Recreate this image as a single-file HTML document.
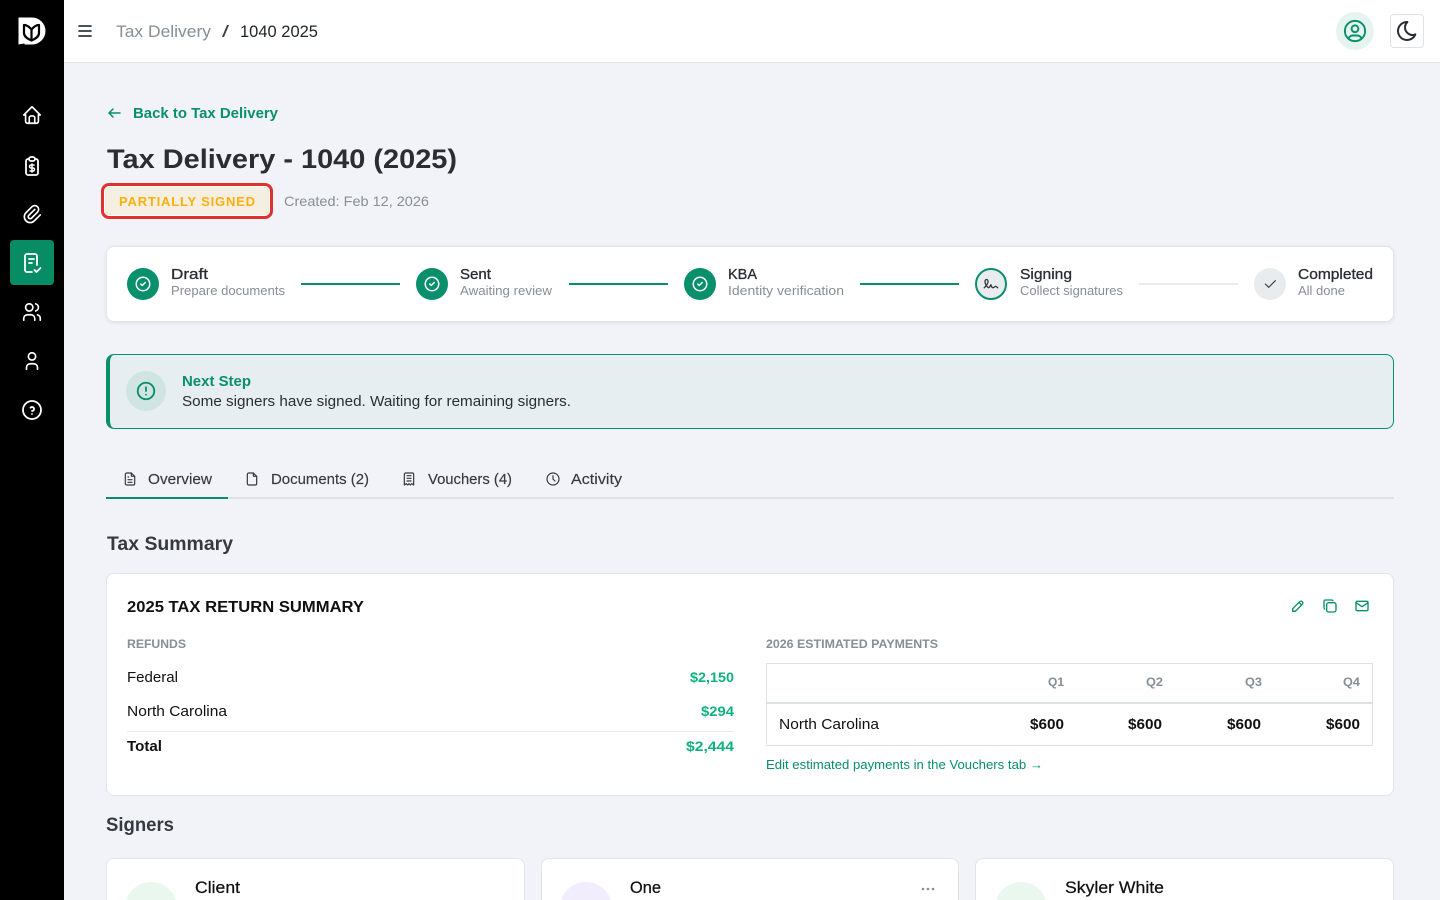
<!DOCTYPE html>
<html lang="en"><head><meta charset="utf-8"><title>Tax Delivery - 1040 (2025)</title>
<style>
html,body{margin:0;padding:0;width:1440px;height:900px;overflow:hidden;background:#f1f3f8}
#app{position:relative;width:1440px;height:900px;overflow:hidden;background:#f1f3f8}
.b{position:absolute;box-sizing:border-box}
.card{background:#fff;border:1px solid #e2e4ea;border-radius:8px}
svg{position:absolute;left:0;top:0}
text{font-family:"Liberation Sans",sans-serif;font-size:14px;fill:#212529}
.i{fill:none;stroke-width:2;stroke-linecap:round;stroke-linejoin:round}
.w{stroke:#fff}.g{stroke:#088f6b}.d{stroke:#343a40}
.s{font-size:14.5px;font-weight:normal;fill:#2b2d33;stroke:#2b2d33;stroke-width:.3}
.sub{font-size:12.5px;fill:#868e96}
.m{font-weight:bold;fill:#0eb27f;font-size:14px}
.th{font-size:12px;fill:#868e96;font-weight:bold}
.tab{font-size:14.5px;fill:#343a40;stroke:#343a40;stroke-width:.15}
</style></head><body>
<div id="app">
<div class="b" style="left:0;top:0;width:64px;height:900px;background:#000"></div>
<div class="b" style="left:64px;top:0;width:1376px;height:63px;background:#fff;border-bottom:1px solid #e5e7eb"></div>
<div class="b" style="left:10px;top:240px;width:44px;height:45px;background:#088c63;border-radius:4px"></div>
<div class="b" style="left:1336px;top:12px;width:38px;height:38px;background:#e6f4f0;border-radius:50%"></div>
<div class="b" style="left:1390px;top:14px;width:34px;height:34px;background:#fff;border:1px solid #dee2e6;border-radius:4px"></div>
<div class="b" style="left:101px;top:183px;width:172px;height:36px;border:3px solid #e03131;border-radius:8px;background:#fff"></div>
<div class="b" style="left:105px;top:187px;width:164px;height:28px;background:#f5efe2;border-radius:4px"></div>
<div class="b card" style="left:106px;top:246px;width:1288px;height:76px;box-shadow:0 1px 4px rgba(0,0,0,.08)"></div>
<div class="b" style="left:301px;top:283px;width:99px;height:2px;background:#088f6b"></div>
<div class="b" style="left:569px;top:283px;width:99px;height:2px;background:#088f6b"></div>
<div class="b" style="left:860px;top:283px;width:99px;height:2px;background:#088f6b"></div>
<div class="b" style="left:1139px;top:283px;width:99px;height:2px;background:#e9ecef"></div>
<div class="b" style="left:127px;top:268px;width:32px;height:32px;border-radius:50%;background:#088f6b"></div>
<div class="b" style="left:416px;top:268px;width:32px;height:32px;border-radius:50%;background:#088f6b"></div>
<div class="b" style="left:684px;top:268px;width:32px;height:32px;border-radius:50%;background:#088f6b"></div>
<div class="b" style="left:975px;top:268px;width:32px;height:32px;border-radius:50%;background:#e9ecef;border:2px solid #088f6b"></div>
<div class="b" style="left:1254px;top:268px;width:32px;height:32px;border-radius:50%;background:#e9ecef"></div>
<div class="b" style="left:106px;top:354px;width:1288px;height:75px;background:#e7eef1;border:1px solid #088f6b;border-left-width:4px;border-radius:8px"></div>
<div class="b" style="left:126px;top:371px;width:40px;height:40px;border-radius:50%;background:#d0e4e2"></div>
<div class="b" style="left:106px;top:497px;width:1288px;height:2px;background:#dee2e6"></div>
<div class="b" style="left:106px;top:497px;width:122px;height:2px;background:#088f6b"></div>
<div class="b card" style="left:106px;top:573px;width:1288px;height:223px"></div>
<div class="b" style="left:127px;top:731px;width:607px;height:1px;background:#e9ecef"></div>
<div class="b" style="left:766px;top:663px;width:607px;height:83px;border:1px solid #dee2e6;background:#fff"></div>
<div class="b" style="left:767px;top:702px;width:605px;height:2px;background:#dee2e6"></div>
<div class="b card" style="left:106px;top:858px;width:419px;height:80px"></div>
<div class="b card" style="left:541px;top:858px;width:418px;height:80px"></div>
<div class="b card" style="left:975px;top:858px;width:419px;height:80px"></div>
<div class="b" style="left:125px;top:882px;width:52px;height:52px;border-radius:50%;background:#e9f7ee"></div>
<div class="b" style="left:560px;top:882px;width:52px;height:52px;border-radius:50%;background:#f1edfc"></div>
<div class="b" style="left:995px;top:882px;width:52px;height:52px;border-radius:50%;background:#e9f7ee"></div>

<svg width="1440" height="900" viewBox="0 0 1440 900">
<!-- logo -->
<path d="M18.500 17.500H32a13.500 13.500 0 0 1 0 27H18.500z" fill="#fff"/>
<path d="M24 25c2.500 0 5 1.500 7.500 4.500C34 26.500 36.500 25 39 25v8c0 3.500-3 5.500-7.500 7.500C27 38.500 24 36.500 24 33z" fill="none" stroke="#000" stroke-width="2.200" stroke-linejoin="round"/>
<path d="M31.500 29.500V40.500" stroke="#000" stroke-width="2.200"/>
<path d="M18.500 44.500l6-1v1.200z" fill="#000"/>
<!-- sidebar icons -->
<g class="i w" style="stroke-width:1.800">
<svg x="21" y="104" width="22" height="22" viewBox="0 0 24 24"><path d="M5 12H3l9-9 9 9h-2"/><path d="M5 12v7a2 2 0 0 0 2 2h10a2 2 0 0 0 2-2v-7"/><path d="M9 21v-6a2 2 0 0 1 2-2h2a2 2 0 0 1 2 2v6"/></svg>
<svg x="20" y="154" width="24" height="22" viewBox="0 0 24 22" preserveAspectRatio="none"><path d="M9 5H8a2 2 0 0 0-2 2v12a2 2 0 0 0 2 2h8a2 2 0 0 0 2-2V7a2 2 0 0 0-2-2h-1"/><rect x="9" y="3" width="6" height="4" rx="2"/><path d="M14 11h-3a1.500 1.500 0 0 0 0 3h2a1.500 1.500 0 0 1 0 3h-3M12 10v8" stroke-width="1.500"/></svg>
<svg x="21" y="203" width="22" height="22" viewBox="0 0 24 24"><path d="M15 7l-6.500 6.500a1.500 1.500 0 0 0 3 3L18 10a3 3 0 0 0-6-6l-6.500 6.500a4.500 4.500 0 0 0 9 9L21 13"/></svg>
<svg x="20" y="251" width="24" height="24" viewBox="0 0 24 24"><path d="M12 21H7a2 2 0 0 1-2-2V5a2 2 0 0 1 2-2h8a2 2 0 0 1 2 2v9"/><path d="M9 8h5M9 12h3M14.500 19l2 2 4-4"/></svg>
<svg x="21" y="301" width="22" height="22" viewBox="0 0 24 24"><path d="M5 7a4 4 0 1 0 8 0 4 4 0 0 0-8 0"/><path d="M3 21v-2a4 4 0 0 1 4-4h4a4 4 0 0 1 4 4v2"/><path d="M16 3.130a4 4 0 0 1 0 7.750"/><path d="M21 21v-2a4 4 0 0 0-3-3.850"/></svg>
<svg x="21" y="350" width="22" height="22" viewBox="0 0 24 24"><path d="M8 7a4 4 0 1 0 8 0 4 4 0 0 0-8 0"/><path d="M6 21v-2a4 4 0 0 1 4-4h4a4 4 0 0 1 4 4v2"/></svg>
<svg x="20" y="398" width="24" height="24" viewBox="0 0 24 24"><circle cx="12" cy="12" r="9"/><path d="M12 16v.010"/><path d="M12 13a2 2 0 0 0 .914-3.782 1.980 1.980 0 0 0-2.414.483"/></svg>
</g>
<!-- header icons -->
<path d="M79 26h12M79 31h12M79 36h12" stroke="#343a40" stroke-width="1.700" stroke-linecap="round" fill="none"/>
<svg x="1341.500" y="17.500" width="27" height="27" viewBox="0 0 24 24" class="i g" style="stroke-width:1.700"><circle cx="12" cy="12" r="9"/><circle cx="12" cy="10" r="3"/><path d="M6.168 18.849A4 4 0 0 1 10 16h4a4 4 0 0 1 3.834 2.855"/></svg>
<svg x="1395" y="19" width="24" height="24" viewBox="0 0 24 24" class="i d"><path d="M12 3h.393a7.500 7.500 0 0 0 7.920 12.446A9 9 0 1 1 12 3z" stroke="#2b2d33"/></svg>
<path d="M109 113h11M109 113l4-4M109 113l4 4" class="i g" style="stroke-width:1.500"/>
<text x="116" y="37" style="font-size:17px;fill:#868e96" textLength="95" lengthAdjust="spacingAndGlyphs">Tax Delivery</text>
<text x="222" y="37" style="font-size:17px;fill:#343a40" textLength="7" lengthAdjust="spacingAndGlyphs">/</text>
<text x="240" y="37" style="font-size:17px;fill:#212529" textLength="78" lengthAdjust="spacingAndGlyphs">1040 2025</text>
<text x="133" y="118" style="font-size:14.500px;font-weight:bold;fill:#088f6b" textLength="145" lengthAdjust="spacingAndGlyphs">Back to Tax Delivery</text>
<text x="107" y="168" style="font-size:27px;font-weight:bold;fill:#2b2d33" textLength="350" lengthAdjust="spacingAndGlyphs">Tax Delivery - 1040 (2025)</text>
<text x="119" y="206" style="font-size:13px;font-weight:bold;fill:#fdb00c" textLength="136">PARTIALLY SIGNED</text>
<text x="284" y="206" style="font-size:14px;fill:#868e96" textLength="145" lengthAdjust="spacingAndGlyphs">Created: Feb 12, 2026</text>
<!-- stepper -->
<g class="i w" style="stroke-width:2">
<svg x="134" y="275" width="18" height="18" viewBox="0 0 24 24"><circle cx="12" cy="12" r="9"/><path d="M9 12l2 2 4-4"/></svg>
<svg x="423" y="275" width="18" height="18" viewBox="0 0 24 24"><circle cx="12" cy="12" r="9"/><path d="M9 12l2 2 4-4"/></svg>
<svg x="691" y="275" width="18" height="18" viewBox="0 0 24 24"><circle cx="12" cy="12" r="9"/><path d="M9 12l2 2 4-4"/></svg>
</g>
<svg x="982" y="275" width="18" height="18" viewBox="0 0 24 24" class="i d" style="stroke-width:1.800"><path d="M3 17c3.333-3.333 5-6 5-8 0-3-1-3-2-3s-2.032 1.085-2 3c.034 2.048 1.658 4.877 2.500 6 1.500 2 2.500 2.500 3.500 1l2-3c.333 2.667 1.333 4 3 4 .53 0 2.639-2 3-2 .517 0 1.517.667 3 2"/></svg>
<svg x="1262" y="276" width="16" height="16" viewBox="0 0 24 24" class="i d" style="stroke-width:1.700"><path d="M5 12l5 5L20 7"/></svg>
<text class="s" x="171" y="279" textLength="37" lengthAdjust="spacingAndGlyphs">Draft</text>
<text class="sub" x="171" y="295" textLength="114" lengthAdjust="spacingAndGlyphs">Prepare documents</text>
<text class="s" x="460" y="279" textLength="31" lengthAdjust="spacingAndGlyphs">Sent</text>
<text class="sub" x="460" y="295" textLength="92" lengthAdjust="spacingAndGlyphs">Awaiting review</text>
<text class="s" x="728" y="279" textLength="29" lengthAdjust="spacingAndGlyphs">KBA</text>
<text class="sub" x="728" y="295" textLength="116" lengthAdjust="spacingAndGlyphs">Identity verification</text>
<text class="s" x="1020" y="279" textLength="52" lengthAdjust="spacingAndGlyphs">Signing</text>
<text class="sub" x="1020" y="295" textLength="103" lengthAdjust="spacingAndGlyphs">Collect signatures</text>
<text class="s" x="1298" y="279" textLength="75" lengthAdjust="spacingAndGlyphs">Completed</text>
<text class="sub" x="1298" y="295" textLength="47" lengthAdjust="spacingAndGlyphs">All done</text>
<!-- next step -->
<svg x="135" y="380" width="22" height="22" viewBox="0 0 24 24" class="i g"><circle cx="12" cy="12" r="9"/><path d="M12 8v4M12 16h.010"/></svg>
<text x="182" y="386" style="font-size:14.500px;font-weight:bold;fill:#088f6b" textLength="69" lengthAdjust="spacingAndGlyphs">Next Step</text>
<text x="182" y="406" style="font-size:14.500px;fill:#2b2d33" textLength="389" lengthAdjust="spacingAndGlyphs">Some signers have signed. Waiting for remaining signers.</text>
<!-- tabs -->
<g class="i d" style="stroke-width:1.800">
<svg x="122" y="471" width="16" height="16" viewBox="0 0 24 24"><path d="M14 3v4a1 1 0 0 0 1 1h4"/><path d="M17 21H7a2 2 0 0 1-2-2V5a2 2 0 0 1 2-2h7l5 5v11a2 2 0 0 1-2 2z"/><path d="M9 9h1M9 13h6M9 17h6"/></svg>
<svg x="244" y="471" width="16" height="16" viewBox="0 0 24 24"><path d="M14 3v4a1 1 0 0 0 1 1h4"/><path d="M17 21H7a2 2 0 0 1-2-2V5a2 2 0 0 1 2-2h7l5 5v11a2 2 0 0 1-2 2z"/></svg>
<svg x="401" y="471" width="16" height="16" viewBox="0 0 24 24"><path d="M5 21V5a2 2 0 0 1 2-2h10a2 2 0 0 1 2 2v16l-3-2-2 2-2-2-2 2-2-2-3 2"/><path d="M9 7h6M9 11h6M9 15h6"/></svg>
<svg x="545" y="471" width="16" height="16" viewBox="0 0 24 24"><circle cx="12" cy="12" r="9"/><path d="M12 7v5l3 3"/></svg>
</g>
<text class="tab" x="148" y="484" textLength="64" lengthAdjust="spacingAndGlyphs">Overview</text>
<text class="tab" x="271" y="484" textLength="98" lengthAdjust="spacingAndGlyphs">Documents (2)</text>
<text class="tab" x="428" y="484" textLength="84" lengthAdjust="spacingAndGlyphs">Vouchers (4)</text>
<text class="tab" x="571" y="484" textLength="51" lengthAdjust="spacingAndGlyphs">Activity</text>
<!-- summary -->
<text x="107" y="550" style="font-size:19px;font-weight:bold;fill:#343a40" textLength="126" lengthAdjust="spacingAndGlyphs">Tax Summary</text>
<text x="127" y="612" style="font-size:15.500px;font-weight:bold;fill:#111" textLength="237" lengthAdjust="spacingAndGlyphs">2025 TAX RETURN SUMMARY</text>
<g class="i g" style="stroke-width:2">
<svg x="1290" y="598" width="16" height="16" viewBox="0 0 24 24"><path d="M4 20h4L18.500 9.500a2.828 2.828 0 1 0-4-4L4 16v4"/><path d="M13.500 6.500l4 4"/></svg>
<svg x="1322" y="598" width="16" height="16" viewBox="0 0 24 24"><rect x="7" y="7" width="14" height="14" rx="3"/><path d="M4 16.500A2.500 2.500 0 0 1 3 14.500V5a2 2 0 0 1 2-2h9.500c.8 0 1.500.4 2 1"/></svg>
<svg x="1354" y="598" width="16" height="16" viewBox="0 0 24 24"><rect x="3" y="5" width="18" height="14" rx="2"/><path d="M3 7l9 6 9-6"/></svg>
</g>
<text x="127" y="648" style="font-size:12px;font-weight:bold;fill:#868e96" textLength="59" lengthAdjust="spacingAndGlyphs">REFUNDS</text>
<text x="766" y="648" style="font-size:12px;font-weight:bold;fill:#868e96" textLength="172" lengthAdjust="spacingAndGlyphs">2026 ESTIMATED PAYMENTS</text>
<text x="127" y="682" style="font-size:14.500px;fill:#111" textLength="51" lengthAdjust="spacingAndGlyphs">Federal</text>
<text class="m" x="690" y="682" textLength="44" lengthAdjust="spacingAndGlyphs">$2,150</text>
<text x="127" y="716" style="font-size:14.500px;fill:#111" textLength="100" lengthAdjust="spacingAndGlyphs">North Carolina</text>
<text class="m" x="701" y="716" textLength="33" lengthAdjust="spacingAndGlyphs">$294</text>
<text x="127" y="751" style="font-size:14.500px;font-weight:bold;fill:#111" textLength="35" lengthAdjust="spacingAndGlyphs">Total</text>
<text class="m" x="686" y="751" textLength="48" lengthAdjust="spacingAndGlyphs">$2,444</text>
<text class="th" x="1048" y="686" textLength="16" lengthAdjust="spacingAndGlyphs">Q1</text>
<text class="th" x="1146" y="686" textLength="17" lengthAdjust="spacingAndGlyphs">Q2</text>
<text class="th" x="1245" y="686" textLength="17" lengthAdjust="spacingAndGlyphs">Q3</text>
<text class="th" x="1343" y="686" textLength="17" lengthAdjust="spacingAndGlyphs">Q4</text>
<text x="779" y="729" style="font-size:14.500px;fill:#111" textLength="100" lengthAdjust="spacingAndGlyphs">North Carolina</text>
<text x="1030" y="729" style="font-size:14.500px;font-weight:bold;fill:#111" textLength="34" lengthAdjust="spacingAndGlyphs">$600</text>
<text x="1128" y="729" style="font-size:14.500px;font-weight:bold;fill:#111" textLength="34" lengthAdjust="spacingAndGlyphs">$600</text>
<text x="1227" y="729" style="font-size:14.500px;font-weight:bold;fill:#111" textLength="34" lengthAdjust="spacingAndGlyphs">$600</text>
<text x="1326" y="729" style="font-size:14.500px;font-weight:bold;fill:#111" textLength="34" lengthAdjust="spacingAndGlyphs">$600</text>
<text x="766" y="769" style="font-size:12.500px;fill:#088f6b" textLength="277" lengthAdjust="spacingAndGlyphs">Edit estimated payments in the Vouchers tab →</text>
<!-- signers -->
<text x="106" y="831" style="font-size:19px;font-weight:bold;fill:#343a40" textLength="68" lengthAdjust="spacingAndGlyphs">Signers</text>
<text x="195" y="893" style="font-size:16.500px;fill:#111;stroke:#111;stroke-width:.25" textLength="45" lengthAdjust="spacingAndGlyphs">Client</text>
<text x="630" y="893" style="font-size:16.500px;fill:#111;stroke:#111;stroke-width:.25" textLength="31" lengthAdjust="spacingAndGlyphs">One</text>
<text x="1065" y="893" style="font-size:16.500px;fill:#111;stroke:#111;stroke-width:.25" textLength="99" lengthAdjust="spacingAndGlyphs">Skyler White</text>
<g fill="#868e96"><circle cx="923" cy="889" r="1.300"/><circle cx="928" cy="889" r="1.300"/><circle cx="933" cy="889" r="1.300"/></g>
</svg>
</div>
</body></html>
